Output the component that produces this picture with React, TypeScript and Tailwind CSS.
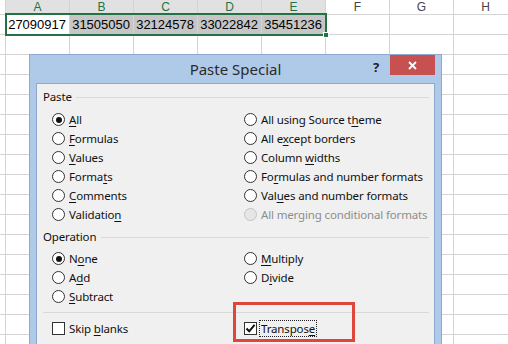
import React from "react";

type Lbl = [string, string, string];

function Label({ l, disabled }: { l: Lbl; disabled?: boolean }) {
  return (
    <span className={disabled ? "text-[#8d8d8d] whitespace-nowrap" : "text-[#111] whitespace-nowrap"}>
      {l[0]}
      {l[1] && <span className="underline underline-offset-[2px] decoration-1">{l[1]}</span>}
      {l[2]}
    </span>
  );
}

function Radio({ checked, disabled }: { checked?: boolean; disabled?: boolean }) {
  return (
    <span
      className={
        disabled
          ? "w-[13px] h-[13px] rounded-full border border-[#c4c4c4] bg-[#e6e6e6] flex items-center justify-center shrink-0"
          : "w-[13px] h-[13px] rounded-full border border-[#333] bg-white flex items-center justify-center shrink-0"
      }
    >
      {checked && <span className="w-[6px] h-[6px] rounded-full bg-[#111]" />}
    </span>
  );
}

function RadioRow({ l, checked, disabled }: { l: Lbl; checked?: boolean; disabled?: boolean }) {
  return (
    <div className="h-[19px] flex items-center gap-[4px]">
      <Radio checked={checked} disabled={disabled} />
      <Label l={l} disabled={disabled} />
    </div>
  );
}

function Checkbox({ checked }: { checked?: boolean }) {
  return (
    <span className="w-[13px] h-[13px] border border-[#333] bg-white flex items-center justify-center shrink-0">
      {checked && (
        <svg width="11" height="11" viewBox="0 0 11 11">
          <path d="M1.5 5.5 L4.2 8.3 L9.6 1.8" fill="none" stroke="#111" strokeWidth="2" />
        </svg>
      )}
    </span>
  );
}

function Heading({ text, lineClass }: { text: string; lineClass: string }) {
  return (
    <div className="h-[14px] flex items-center">
      <span className="text-[#111] whitespace-nowrap">{text}</span>
      <div className={lineClass} />
    </div>
  );
}

const cols = ["A", "B", "C", "D", "E", "F", "G", "H"];
const values = ["27090917", "31505050", "32124578", "33022842", "35451236"];

export default function App() {
  const rows = Array.from({ length: 17 }, (_, i) => i);
  return (
    <div className="relative w-[508px] h-[344px] overflow-hidden bg-white">
      {/* spreadsheet */}
      <div className="flex flex-col font-['Liberation_Sans',Arial,sans-serif]">
        <div className="flex h-[15px]">
          <div className="w-[6px] shrink-0 border-r border-b border-[#d4d4d4] bg-white" />
          {cols.map((c, i) => (
            <div
              key={c}
              className={
                i < 5
                  ? "w-[64px] shrink-0 border-r border-b border-[#d4d4d4] bg-[#e1e1e1] text-[#217346] text-[12px] leading-[14px] flex justify-center"
                  : "w-[64px] shrink-0 border-r border-b border-[#d4d4d4] bg-white text-[#444] text-[12px] leading-[14px] flex justify-center"
              }
            >
              {c}
            </div>
          ))}
        </div>
        {rows.map((r) => (
          <div key={r} className="flex h-[20px]">
            <div className="w-[6px] shrink-0 border-r border-b border-[#d4d4d4] bg-white" />
            {cols.map((c, i) => (
              <div
                key={c}
                className={
                  r === 0 && i > 0 && i < 5
                    ? "w-[64px] shrink-0 border-r border-b border-[#d4d4d4] bg-[#c6c6c6] text-[13px] text-black flex items-center justify-end pr-[3px]"
                    : "w-[64px] shrink-0 border-r border-b border-[#d4d4d4] bg-white text-[13px] text-black flex items-center justify-end pr-[3px]"
                }
              >
                {r === 0 && i < 5 ? values[i] : ""}
              </div>
            ))}
          </div>
        ))}
      </div>

      {/* selection border */}
      <div className="absolute left-[5px] top-[13px] w-[322px] h-[23px] border-2 border-[#217346]" />
      <div className="absolute left-[323px] top-[32px] w-[6px] h-[6px] bg-[#217346] border border-white" />

      {/* dialog */}
      <div className="absolute left-[29px] top-[54px] w-[413px] h-[300px] bg-[#afcae8] border border-[#8ea9cc] flex flex-col font-['Noto_Sans',sans-serif] text-[11.5px] tracking-[-0.15px]">
        <div className="h-[28px] relative flex items-center justify-center shrink-0">
          <span className="text-[15px] tracking-normal text-[#2b2b2b]">Paste Special</span>
          <span className="absolute left-[343px] top-[3px] text-[13px] font-bold text-[#222]">?</span>
          <div className="absolute right-[6px] top-0 w-[45px] h-[20px] bg-[#c75050] flex items-center justify-center">
            <svg width="9" height="9" viewBox="0 0 9 9">
              <path d="M1 1 L8 8 M8 1 L1 8" stroke="white" strokeWidth="1.8" />
            </svg>
          </div>
        </div>
        <div className="mx-[6px] flex-1 bg-[#f0f0f0] border border-[#8ea9cc] pl-[6px] pr-[5px] pt-[6px] flex flex-col">
          <Heading text="Paste" lineClass="flex-1 h-px bg-[#d9d9d9] ml-[4px]" />
          <div className="mt-[6px] pl-[9px] grid grid-cols-[192px_1fr]">
            <div className="flex flex-col">
              <RadioRow l={["", "A", "ll"]} checked />
              <RadioRow l={["", "F", "ormulas"]} />
              <RadioRow l={["", "V", "alues"]} />
              <RadioRow l={["Forma", "t", "s"]} />
              <RadioRow l={["", "C", "omments"]} />
              <RadioRow l={["Validatio", "n", ""]} />
            </div>
            <div className="flex flex-col">
              <RadioRow l={["All using Source t", "h", "eme"]} />
              <RadioRow l={["All e", "x", "cept borders"]} />
              <RadioRow l={["Column ", "w", "idths"]} />
              <RadioRow l={["Fo", "r", "mulas and number formats"]} />
              <RadioRow l={["Val", "u", "es and number formats"]} />
              <RadioRow l={["All merging conditional formats", "", ""]} disabled />
            </div>
          </div>
          <div className="mt-[6px]">
            <Heading text="Operation" lineClass="flex-1 h-px bg-[#d9d9d9] ml-[5px]" />
          </div>
          <div className="mt-[5px] pl-[9px] grid grid-cols-[192px_1fr]">
            <div className="flex flex-col">
              <RadioRow l={["N", "o", "ne"]} checked />
              <RadioRow l={["A", "d", "d"]} />
              <RadioRow l={["", "S", "ubtract"]} />
            </div>
            <div className="flex flex-col">
              <RadioRow l={["", "M", "ultiply"]} />
              <RadioRow l={["D", "i", "vide"]} />
            </div>
          </div>
          <div className="mt-[6px] h-px bg-[#d9d9d9]" />
          <div className="mt-[6px] pl-[9px] grid grid-cols-[192px_1fr]">
            <div className="h-[19px] flex items-center gap-[4px]">
              <Checkbox />
              <Label l={["Skip ", "b", "lanks"]} />
            </div>
            <div className="h-[19px] flex items-center gap-[2px]">
              <Checkbox checked />
              <span className="border border-dotted border-[#222] px-[1px] leading-[15px]">
                <Label l={["Transpos", "e", ""]} />
              </span>
            </div>
          </div>
        </div>
      </div>

      {/* annotation */}
      <div className="absolute left-[233px] top-[302px] w-[122px] h-[40px] border-[3px] border-[#e0453c]" />
    </div>
  );
}
